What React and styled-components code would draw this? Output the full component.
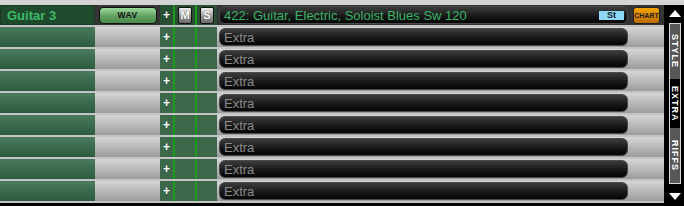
import React from 'react';
import styled, { createGlobalStyle } from 'styled-components';

const Global = createGlobalStyle`
  html, body { margin: 0; padding: 0; background: #000; }
  body { font-family: "Liberation Sans", Arial, sans-serif; }
`;

const Frame = styled.div`
  width: 684px;
  height: 206px;
  box-sizing: border-box;
  border-top: 5px solid #d4d4d4;
  background: #000;
  display: flex;
  overflow: hidden;
`;

const Rows = styled.div`
  width: 664px;
  height: 198px;
  display: flex;
  flex-direction: column;
  gap: 2px;
  background: #c4c4c4;
`;

const Row = styled.div`
  display: flex;
  height: 20px;
  flex: 0 0 20px;
  background: ${p => p.$head ? '#343434' : 'linear-gradient(#d6d6d6, #9c9c9c)'};
`;

const NameCell = styled.div`
  width: 95px;
  box-sizing: border-box;
  padding-left: 6px;
  display: flex;
  align-items: center;
  background: ${p => p.$head ? '#1f4a2e' : 'linear-gradient(#4a7b5e, #2c5a3f)'};
  border: ${p => p.$head ? '1px solid #163a22' : 'none'};
  color: #3cbb68;
  font-weight: bold;
  font-size: 13px;
`;

const WavCell = styled.div`
  width: 65px;
  display: flex;
  align-items: center;
  justify-content: center;
`;

const WavButton = styled.div`
  width: 58px;
  height: 17px;
  box-sizing: border-box;
  border: 1px solid #111;
  border-radius: 4px;
  background: linear-gradient(#9cd89c, #5c9c5c 60%, #4a8a4a);
  display: flex;
  align-items: center;
  justify-content: center;
  font-size: 8.5px;
  font-weight: bold;
  color: #111;
  letter-spacing: 0.5px;
`;

const StripCell = styled.div`
  width: ${p => p.$w}px;
  box-sizing: border-box;
  border-left: ${p => p.$line ? '2px solid #1c9c1c' : 'none'};
  background: ${p => p.$head ? '#284f34' : '#3a6849'};
  display: flex;
  align-items: center;
  justify-content: center;
  color: #fff;
  font-weight: bold;
  font-size: 12px;
`;

const MiniButton = styled.div`
  width: 14px;
  height: 17px;
  box-sizing: border-box;
  border: 1px solid #111;
  border-radius: 2px;
  background: linear-gradient(#f0f0f0, #9a9a9a 55%, #6a6a6a);
  display: flex;
  align-items: center;
  justify-content: center;
  font-size: 11px;
  font-weight: bold;
  color: #fff;
  text-shadow: 0 0 1px #333;
`;

const Field = styled.div`
  margin-left: 2px;
  width: 409px;
  height: 18px;
  align-self: center;
  box-sizing: border-box;
  border: 1px solid #4a4a4a;
  border-radius: 6px;
  background: linear-gradient(#3c3c3c, #161616 60%, #050505);
  display: flex;
  align-items: center;
  padding: 0 3px 0 4px;
  font-size: 13px;
  color: ${p => p.$head ? '#38b566' : '#8a8a8a'};
  white-space: nowrap;
`;

const FieldText = styled.span`
  flex: 1;
`;

const Badge = styled.span`
  width: 25px;
  height: 9px;
  background: #8cd8f6;
  color: #111;
  font-size: 9px;
  font-weight: bold;
  line-height: 9px;
  text-align: center;
`;

const Tail = styled.div`
  flex: 1;
  display: flex;
  align-items: center;
  padding-left: 5px;
`;

const ChartButton = styled.div`
  width: 27px;
  height: 17px;
  box-sizing: border-box;
  border: 1px solid #222;
  border-radius: 3px;
  background: linear-gradient(#f2a200, #d68400 60%, #b86c00);
  display: flex;
  align-items: center;
  justify-content: center;
  font-size: 7px;
  font-weight: bold;
  color: #1a1a1a;
`;

const Sidebar = styled.div`
  width: 20px;
  display: flex;
  flex-direction: column;
  align-items: center;
  padding-top: 5px;
  padding-left: 1px;
  box-sizing: border-box;
`;

const Arrow = styled.div`
  width: 0;
  height: 0;
  border-left: 6px solid transparent;
  border-right: 6px solid transparent;
  ${p => p.$down ? 'border-top: 7px solid #fff;' : 'border-bottom: 7px solid #fff;'}
  margin: ${p => p.$down ? '9px 0 0' : '0 0 6px'};
`;

const TabBox = styled.div`
  width: 12px;
  height: 161px;
  box-sizing: border-box;
  border: 1px solid #d8d8d8;
  display: flex;
  flex-direction: column;
`;

const Tab = styled.div`
  height: ${p => p.$h}px;
  background: ${p => p.$active ? '#000' : '#585858'};
  display: flex;
  align-items: center;
  justify-content: center;
  writing-mode: vertical-rl;
  color: #fff;
  font-size: 9px;
  font-weight: bold;
  letter-spacing: 1px;
`;

const extraRows = Array.from({ length: 8 });

export default function App() {
  return (
    <>
      <Global />
      <Frame>
        <Rows>
          <Row $head>
            <NameCell $head>Guitar 3</NameCell>
            <WavCell><WavButton>WAV</WavButton></WavCell>
            <StripCell $head $w={13}>+</StripCell>
            <StripCell $head $line $w={22}><MiniButton>M</MiniButton></StripCell>
            <StripCell $head $line $w={22}><MiniButton>S</MiniButton></StripCell>
            <Field $head>
              <FieldText>422: Guitar, Electric, Soloist Blues Sw 120</FieldText>
              <Badge>St</Badge>
            </Field>
            <Tail><ChartButton>CHART</ChartButton></Tail>
          </Row>
          {extraRows.map((_, i) => (
            <Row key={i}>
              <NameCell />
              <WavCell />
              <StripCell $w={13}>+</StripCell>
              <StripCell $line $w={22} />
              <StripCell $line $w={22} />
              <Field><FieldText>Extra</FieldText></Field>
              <Tail />
            </Row>
          ))}
        </Rows>
        <Sidebar>
          <Arrow />
          <TabBox>
            <Tab $h={55}>STYLE</Tab>
            <Tab $h={49} $active>EXTRA</Tab>
            <Tab $h={55}>RIFFS</Tab>
          </TabBox>
          <Arrow $down />
        </Sidebar>
      </Frame>
    </>
  );
}
